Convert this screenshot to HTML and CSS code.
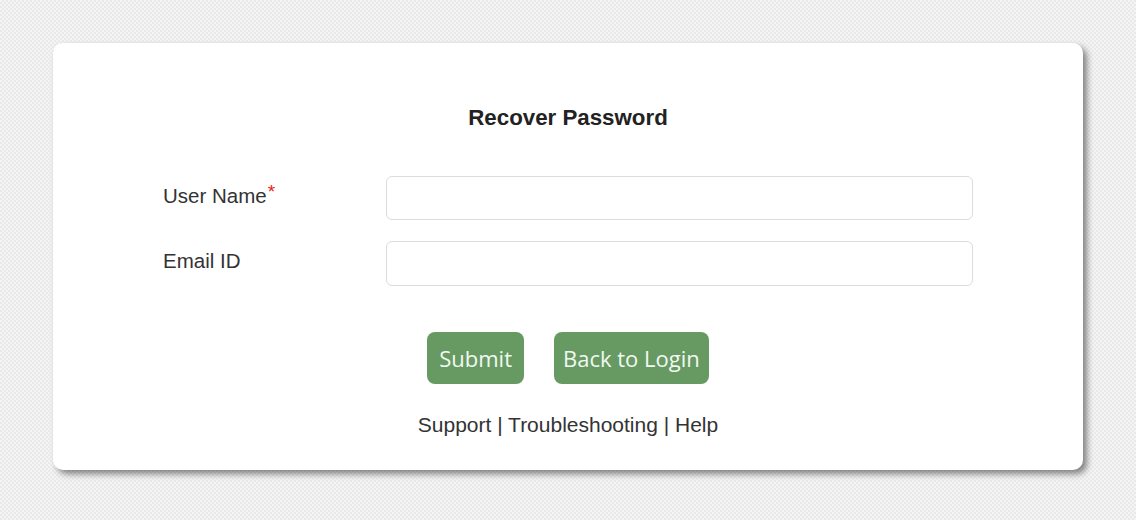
FILE: index.html
```html
<!DOCTYPE html>
<html lang="en">
<head>
<meta charset="utf-8">
<title>Recover Password</title>
<link rel="stylesheet" href="styles.css">
</head>
<body>
<div class="card">
  <h1 class="title">Recover Password</h1>
  <form class="form">
    <div class="row">
      <label class="label" for="user">User Name<span class="req">*</span></label>
      <input class="input" id="user" type="text">
    </div>
    <div class="row">
      <label class="label" for="email">Email ID</label>
      <input class="input input-tall" id="email" type="text">
    </div>
    <div class="actions">
      <button type="button" class="btn">Submit</button>
      <button type="button" class="btn">Back to Login</button>
    </div>
  </form>
  <div class="links">Support | Troubleshooting | Help</div>
</div>
</body>
</html>
```
FILE: styles.css
```css
html, body {
  margin: 0;
  padding: 0;
}
body {
  width: 1136px;
  height: 520px;
  overflow: hidden;
  font-family: "Liberation Sans", Arial, sans-serif;
  color: #333;
  background-color: #f4f4f4;
  background-image:
    linear-gradient(45deg, #e9e9e9 25%, transparent 25%, transparent 75%, #e9e9e9 75%),
    linear-gradient(45deg, #e9e9e9 25%, transparent 25%, transparent 75%, #e9e9e9 75%);
  background-size: 4px 4px;
  background-position: 0 0, 2px 2px;
  padding-top: 43px;
  box-sizing: border-box;
}
.card {
  margin: 0 53px;
  width: 1030px;
  height: 427px;
  box-sizing: border-box;
  background: #fff;
  border-radius: 10px;
  box-shadow: 4px 4px 6px rgba(0, 0, 0, 0.45);
  padding: 63px 110px 0;
  display: flex;
  flex-direction: column;
}
.title {
  margin: 0;
  font-size: 22.3px;
  line-height: 24px;
  font-weight: bold;
  text-align: center;
  color: #222;
}
.form {
  margin-top: 46px;
  display: flex;
  flex-direction: column;
  gap: 21px;
}
.row {
  display: flex;
  align-items: center;
}
.label {
  width: 223px;
  font-size: 20.5px;
  line-height: 24px;
  color: #333;
  padding-bottom: 5px;
}
.req {
  color: #f01818;
  font-size: 19px;
  line-height: 0;
  vertical-align: 5px;
  margin-left: 1px;
}
.input {
  flex: 1;
  height: 44px;
  box-sizing: border-box;
  border: 1px solid #dcdcdc;
  border-radius: 6px;
  background: #fff;
  margin: 0;
  padding: 0 10px;
  font-size: 18px;
}
.input-tall {
  height: 45px;
}
.actions {
  margin-top: 25px;
  display: flex;
  justify-content: center;
  gap: 30px;
}
.btn {
  height: 52px;
  padding: 0 12px;
  border: none;
  border-radius: 8px;
  background: #679a62;
  color: #f2f8f2;
  font-family: "Open Sans", "Noto Sans", sans-serif;
  font-size: 22px;
  line-height: 52px;
  cursor: pointer;
}
.btn + .btn {
  padding: 0 9px;
}
.links {
  margin-top: 29px;
  text-align: center;
  font-size: 21px;
  line-height: 24px;
  color: #333;
}
```
